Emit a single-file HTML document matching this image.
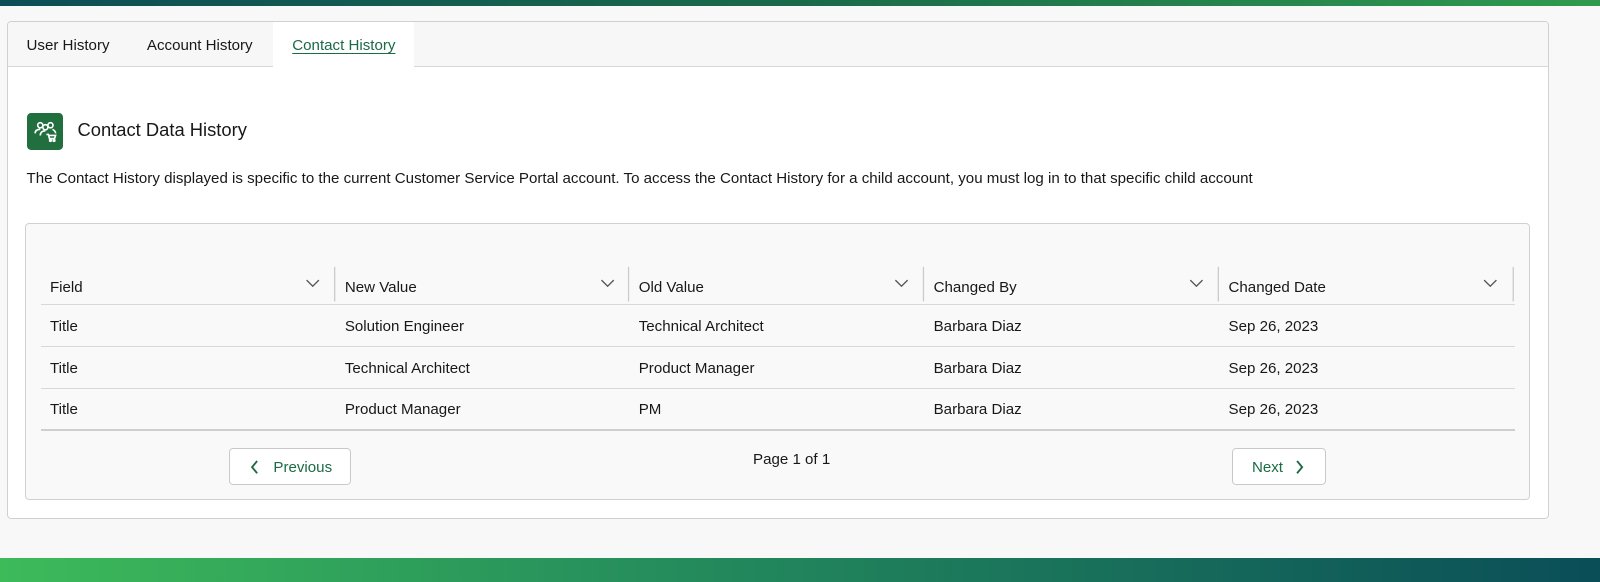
<!DOCTYPE html>
<html><head><style>
*{box-sizing:border-box;margin:0;padding:0}
body{width:1600px;height:570px;background:#f8f8f8;font-family:"Liberation Sans",sans-serif;color:#181818;position:relative;overflow:hidden;font-size:15px}
.z{position:absolute;left:0;top:0;width:1568px;height:559px;zoom:1.0204}
.top{position:absolute;left:0;top:0;width:1568px;height:6px;background:linear-gradient(90deg,#0d4d56,#1a6a4a 50%,#2f9a4f)}
.bot{position:absolute;left:0;top:547px;width:1568px;height:23px;background:linear-gradient(90deg,#3dba5a,#23895c 45%,#0a4e58)}
.card{position:absolute;left:7px;top:21px;width:1511px;height:488px;background:#fff;border:1px solid #d0d0d0;border-radius:4px;overflow:hidden}
.tabs{height:44px;background:#f7f7f7;border-bottom:1px solid #d8d8d8;position:relative}
.tab{position:absolute;top:0;height:44px;line-height:47px;font-size:14.8px}
.act{background:#fff;height:45px;color:#1b6b45;text-decoration:underline;text-underline-offset:3px;text-align:center}
.abs{position:absolute}
.tbl{position:absolute;left:17px;top:197px;width:1474px;height:271px;background:#f9f9f9;border:1px solid #d0d0d0;border-radius:4px}
.th,.td{position:absolute;font-size:14.8px}
.hl{position:absolute;left:14px;width:1445px;height:1px;background:#d8d8d8}
.btn{position:absolute;top:219px;height:36px;background:#fff;border:1px solid #c9c9c9;border-radius:4px;color:#1b6b45;line-height:37px;font-size:14.8px}
</style></head><body>
<div class="z">
<div class="top"></div>
<div class="card">
 <div class="tabs">
  <div class="tab" style="left:18px">User History</div>
  <div class="tab" style="left:136px">Account History</div>
  <div class="tab act" style="left:260px;width:138px">Contact History</div>
 </div>
 <div class="abs" style="left:18px;top:89px;width:36px;height:36px;background:#216e3e;border-radius:4px">
  <svg width="36" height="36" viewBox="0 0 36 36" fill="none" stroke="#fff" stroke-width="1.6">
   <circle cx="13" cy="12" r="2.5"/><circle cx="23" cy="12" r="2.5"/><circle cx="18" cy="14" r="2.5"/>
   <path d="M8 20c0-3 2-4 5-4M28 20c0-2-1-3-3-4M13 22c0-3 2-4.5 5-4.5"/>
   <path d="M19 21h2l1 4h5l1-3h-6" /><circle cx="23" cy="27" r=".8" fill="#fff"/><circle cx="26.5" cy="27" r=".8" fill="#fff"/>
  </svg>
 </div>
 <div class="abs" style="left:68px;top:95px;font-size:18px">Contact Data History</div>
 <div class="abs" style="left:18px;top:145px;font-size:14.8px;white-space:nowrap">The Contact History displayed is specific to the current Customer Service Portal account. To access the Contact History for a child account, you must log in to that specific child account</div>
 <div class="tbl">
  <div class="th" style="left:23px;top:53px">Field</div>
  <div class="th" style="left:312px;top:53px">New Value</div>
  <div class="th" style="left:600px;top:53px">Old Value</div>
  <div class="th" style="left:889px;top:53px">Changed By</div>
  <div class="th" style="left:1178px;top:53px">Changed Date</div>
  <svg class="abs" style="left:0;top:0" width="1474" height="80" fill="none" stroke="#555" stroke-width="1.3">
   <path d="M275 55l6 6 6-6M564 55l6 6 6-6M852 55l6 6 6-6M1141 55l6 6 6-6M1429 55l6 6 6-6"/>
   <path d="M302.5 42v34M590.5 42v34M879.5 42v34M1168.5 42v34M1457.5 42v34" stroke="#ccc"/>
  </svg>
  <div class="hl" style="top:78px"></div>
  <div class="td" style="left:23px;top:92px">Title</div><div class="td" style="left:312px;top:92px">Solution Engineer</div><div class="td" style="left:600px;top:92px">Technical Architect</div><div class="td" style="left:889px;top:92px">Barbara Diaz</div><div class="td" style="left:1178px;top:92px">Sep 26, 2023</div>
  <div class="hl" style="top:119px"></div>
  <div class="td" style="left:23px;top:133px">Title</div><div class="td" style="left:312px;top:133px">Technical Architect</div><div class="td" style="left:600px;top:133px">Product Manager</div><div class="td" style="left:889px;top:133px">Barbara Diaz</div><div class="td" style="left:1178px;top:133px">Sep 26, 2023</div>
  <div class="hl" style="top:160px"></div>
  <div class="td" style="left:23px;top:173px">Title</div><div class="td" style="left:312px;top:173px">Product Manager</div><div class="td" style="left:600px;top:173px">PM</div><div class="td" style="left:889px;top:173px">Barbara Diaz</div><div class="td" style="left:1178px;top:173px">Sep 26, 2023</div>
  <div class="hl" style="top:200px;height:2px;background:#cfcfcf"></div>
  <div class="btn" style="left:198px;width:120px;padding-left:43px">Previous
   <svg class="abs" style="left:20px;top:11px" width="10" height="14" fill="none" stroke="#1b6b45" stroke-width="1.8"><path d="M7 1L2 7l5 6"/></svg></div>
  <div class="td" style="left:712px;top:222px">Page 1 of 1</div>
  <div class="btn" style="left:1181px;width:93px;padding-left:19px">Next
   <svg class="abs" style="left:60px;top:11px" width="10" height="14" fill="none" stroke="#1b6b45" stroke-width="1.8"><path d="M3 1l5 6-5 6"/></svg></div>
 </div>
</div>
<div class="bot"></div>
</div>
</body></html>
